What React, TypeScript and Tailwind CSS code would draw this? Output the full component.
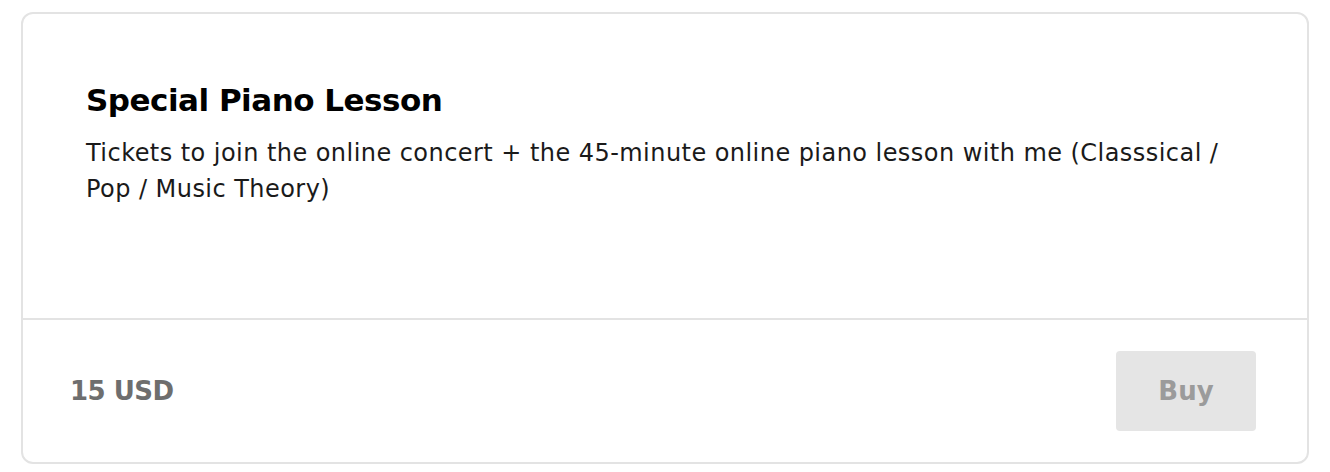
export default function App() {
  return (
    <div className="min-h-screen bg-white px-[21px] pt-[12px] font-['DejaVu_Sans',sans-serif]">
      <div className="flex h-[452px] flex-col rounded-[12px] border-2 border-[#e3e3e3] bg-white">
        <div className="h-[304px] px-[63px] pt-[64px]">
          <h2 className="text-[31px] font-semibold leading-[44px] tracking-[-0.5px] text-black">
            Special Piano Lesson
          </h2>
          <p className="mt-[13px] max-w-[1160px] text-[24px] leading-[36px] tracking-[0.45px] text-[#1a1a1a]">
            Tickets to join the online concert + the 45-minute online piano lesson with me (Classsical / Pop / Music Theory)
          </p>
        </div>
        <div className="flex flex-1 items-center justify-between border-t-2 border-[#e3e3e3] pl-[47px] pr-[51px]">
          <span className="text-[26px] font-semibold tracking-[-0.5px] text-[#6e6e6e]">15 USD</span>
          <button className="h-[80px] w-[140px] rounded-[4px] bg-[#e5e5e5] text-[26px] font-semibold text-[#9b9b9b]">
            Buy
          </button>
        </div>
      </div>
    </div>
  );
}
